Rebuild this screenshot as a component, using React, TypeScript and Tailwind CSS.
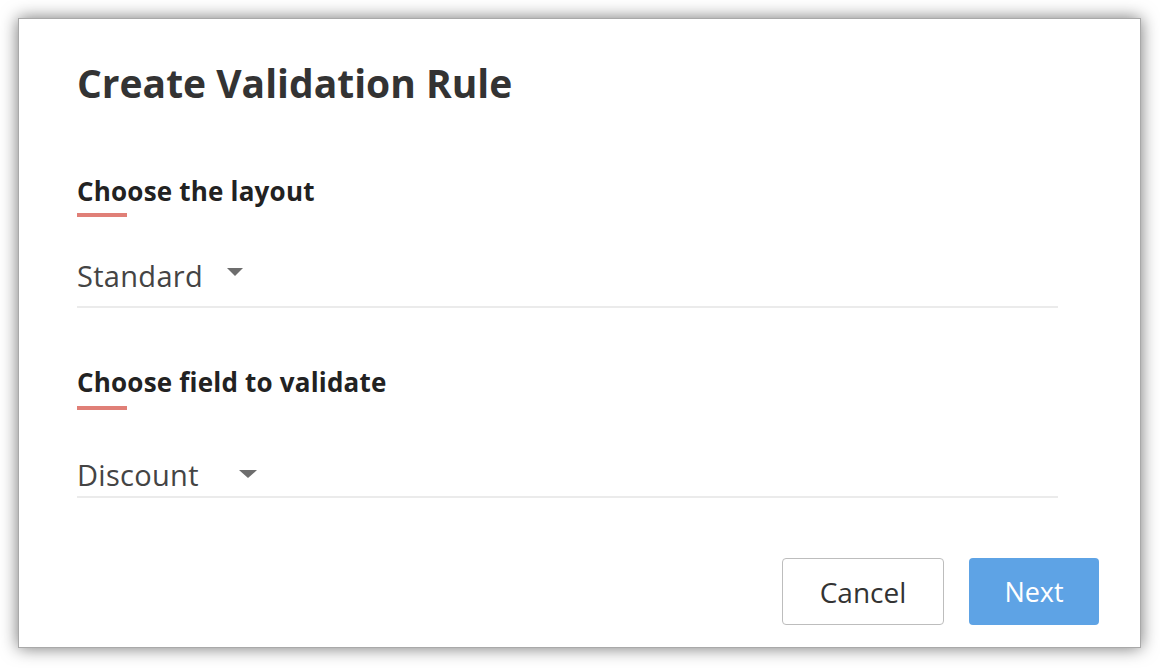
import React from "react";

function Caret({ w }: { w: number }) {
  return (
    <svg width={w} height="8" viewBox={`0 0 ${w} 8`} className="block">
      <polygon points={`0,0 ${w},0 ${w / 2},8`} fill="#6d6d6d" />
    </svg>
  );
}

export default function App() {
  return (
    <div
      className="w-[1160px] h-[668px] bg-white p-[18px]"
      style={{ fontFamily: "'Open Sans', 'Noto Sans', sans-serif" }}
    >
      <div className="w-[1123px] h-[630px] bg-white border border-[#a9a9a9] shadow-[0_0_16px_rgba(0,0,0,0.55)] pl-[58px] pr-[41px] pt-[40px] flex flex-col">
        <h1 className="text-[39px] leading-[48px] font-bold text-[#333] tracking-[0px]">
          Create Validation Rule
        </h1>

        <div className="mt-[68px] text-[26px] leading-[32px] font-bold text-[#222] tracking-[0.2px]">
          Choose the layout
        </div>
        <div className="mt-[6px] h-[4px] w-[50px] bg-[#e07f77]" />
        <div className="mt-[41px] flex items-start w-[981px] border-b-2 border-[#ebebeb] pb-[12px]">
          <span className="w-[150px] text-[29px] leading-[36px] text-[#444] tracking-[0.3px]">Standard</span>
          <span className="mt-[10px]">
            <Caret w={16} />
          </span>
        </div>

        <div className="mt-[58px] text-[26px] leading-[32px] font-bold text-[#222] tracking-[0.2px]">
          Choose field to validate
        </div>
        <div className="mt-[8px] h-[4px] w-[50px] bg-[#e07f77]" />
        <div className="mt-[47px] flex items-start w-[981px] border-b-2 border-[#ebebeb] pb-[3px]">
          <span className="w-[162px] text-[29px] leading-[36px] text-[#444] tracking-[0.3px]">Discount</span>
          <span className="mt-[13px]">
            <Caret w={18} />
          </span>
        </div>

        <div className="mt-[60px] flex justify-end gap-[25px]">
          <button className="w-[162px] h-[67px] rounded-[4px] border border-[#bdbdbd] bg-white text-[28px] text-[#333]">
            Cancel
          </button>
          <button className="w-[130px] h-[67px] rounded-[4px] bg-[#5ea3e5] text-[27px] font-medium text-white pt-[2px]">
            Next
          </button>
        </div>
      </div>
    </div>
  );
}
